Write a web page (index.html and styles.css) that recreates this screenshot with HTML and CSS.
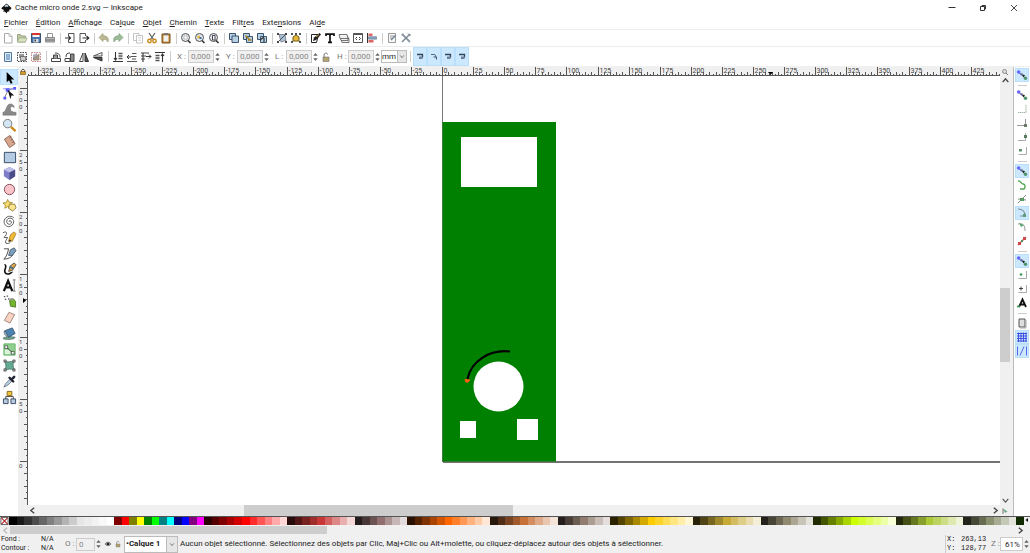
FILE: index.html
```html
<!DOCTYPE html>
<html lang="fr">
<head>
<meta charset="utf-8">
<title>Cache micro onde 2.svg — Inkscape</title>
<link rel="stylesheet" href="styles.css">
</head>
<body>
<svg class="sprite" aria-hidden="true">
  <symbol id="new" viewBox="0 0 12 12"><path d="M2.500 1.500h4.500l3 3v6.500h-7.500z" fill="#fff" stroke="#aaa"/><path d="M7 1.500v3h3" fill="none" stroke="#aaa" stroke-width=".7"/></symbol>
  <symbol id="open" viewBox="0 0 12 12"><path d="M1.500 10V2.500h3l1 1.500h4v6z" fill="#b9c8a0" stroke="#9aa58a"/><path d="M1.500 10l1.500-4h8l-1.500 4z" fill="#d8e4c0" stroke="#a3ad8e" stroke-width=".8"/></symbol>
  <symbol id="save" viewBox="0 0 12 12"><path d="M1.500 1.500h9v9h-9z" fill="#4a74ad" stroke="#3b5277"/><path d="M2.500 1h7v4h-7z" fill="#f4f4f4"/><path d="M2 1h8v2H2z" fill="#d9362b"/><path d="M3.500 7h5v3.500h-5z" fill="#ddd"/><path d="M4.500 7.500h1.500v2H4.500z" fill="#345"/></symbol>
  <symbol id="print" viewBox="0 0 12 12"><path d="M3.500 1.500h5v4h-5z" fill="#fff" stroke="#999"/><path d="M1.500 5.500h9v4.500h-9z" fill="#bbb" stroke="#888"/><path d="M2 8h8" stroke="#666"/></symbol>
  <symbol id="import" viewBox="0 0 12 12"><path d="M4.500 4V1.500h5.500v9H4.500V8" fill="#fff" stroke="#555"/><path d="M1 6h5M4.500 4l2 2-2 2" fill="none" stroke="#333" stroke-width="1.200"/></symbol>
  <symbol id="export" viewBox="0 0 12 12"><path d="M7.500 4V1.500H2v9h5.500V8" fill="#fff" stroke="#555"/><path d="M4.500 6h6M8.500 4l2.300 2-2.300 2" fill="none" stroke="#333" stroke-width="1.200"/></symbol>
  <symbol id="undo" viewBox="0 0 12 12"><path d="M1 5.500l4-4v2.300c4 0 6 1.700 5 6.200-1-2.300-2.500-2.800-5-2.700v2.200z" fill="#bdb993" stroke="#8f8b65" stroke-width=".6"/></symbol>
  <symbol id="redo" viewBox="0 0 12 12"><path d="M11 5.500l-4-4v2.300c-4 0-6 1.700-5 6.200 1-2.300 2.500-2.800 5-2.700v2.200z" fill="#9fbd9b" stroke="#6d9168" stroke-width=".6"/></symbol>
  <symbol id="copy" viewBox="0 0 12 12"><g fill="#fff" stroke="#b5b5b5" stroke-width=".8"><path d="M1.500 1.500h5.500v7H1.500z"/><path d="M4.500 3.500h6v7.500h-6z"/></g><path d="M6 5.500h3M6 7h3M6 8.500h3" stroke="#ccc" stroke-width=".6"/></symbol>
  <symbol id="cut" viewBox="0 0 12 12"><path d="M3 1l4.500 6.500M9 1L4.500 7.500" stroke="#666" stroke-width="1.300"/><circle cx="3.500" cy="9" r="1.700" fill="none" stroke="#c98716" stroke-width="1.400"/><circle cx="8.500" cy="9" r="1.700" fill="none" stroke="#c98716" stroke-width="1.400"/></symbol>
  <symbol id="paste" viewBox="0 0 12 12"><path d="M2 2h8v9H2z" fill="#c58a3a" stroke="#76501a"/><path d="M3.500 3.500h5v6h-5z" fill="#f1f1f1"/><path d="M4 1h4v2H4z" fill="#777"/></symbol>
  <symbol id="zoomsel" viewBox="0 0 12 12"><circle cx="5.500" cy="5.500" r="4" fill="#dfe6ec" stroke="#555"/><path d="M4 4h3v3H4z" fill="#fff" stroke="#aaa" stroke-width=".6"/><path d="M8 8.500l2.500 2.500" stroke="#333" stroke-width="1.600"/></symbol>
  <symbol id="zoomdraw" viewBox="0 0 12 12"><circle cx="5.500" cy="5.500" r="4" fill="#dfe6ec" stroke="#555"/><circle cx="4.700" cy="5" r="1.500" fill="#e8b93a"/><path d="M5.500 5h2v2h-2z" fill="#446faa"/><path d="M8 8.500l2.500 2.500" stroke="#333" stroke-width="1.600"/></symbol>
  <symbol id="zoompage" viewBox="0 0 12 12"><circle cx="5.500" cy="5.500" r="4" fill="#dfe6ec" stroke="#555"/><path d="M4.500 3.500h2.500V8H4.500z" fill="#fff" stroke="#445"/><path d="M8 8.500l2.500 2.500" stroke="#333" stroke-width="1.600"/></symbol>
  <symbol id="dup" viewBox="0 0 12 12"><g fill="#b9d0e2" stroke="#385470"><path d="M1.500 1.500h6v6h-6z"/><path d="M4 4h6.500v6.500H4z"/></g></symbol>
  <symbol id="clone" viewBox="0 0 12 12"><g fill="#b9d0e2" stroke="#385470"><path d="M1.500 1.500h6v6h-6z"/><path d="M4.500 4.500h6v6h-6z"/></g><path d="M3.500 3.500l4 4M6 8h3.500" stroke="#a78320" stroke-width="1.500"/></symbol>
  <symbol id="unlink" viewBox="0 0 12 12"><g fill="#b9d0e2" stroke="#385470"><path d="M1.500 1.500h6v6h-6z"/><path d="M4.500 4.500h6v6h-6z"/></g><path d="M4 8l4-3M8 6v4" stroke="#343434" stroke-width="1.200"/></symbol>
  <symbol id="group" viewBox="0 0 12 12"><path d="M3 2.500h6l1 6-5 1.500z" fill="#aac1d5" stroke="#667" stroke-width=".7"/><path d="M1 1h2v2H1zM9 1h2v2H9zM1 9h2v2H1zM9 9h2v2H9z" fill="#444"/><path d="M3 9l6-6" stroke="#456"/></symbol>
  <symbol id="ungroup" viewBox="0 0 12 12"><path d="M3 5l3-2 3 2v4H3z" fill="#e5b83c" stroke="#775b18"/><path d="M1 1h2v2H1zM9 1h2v2H9zM1 9h2v2H1zM9 9h2v2H9zM5 1h2v2H5z" fill="#555"/></symbol>
  <symbol id="fill" viewBox="0 0 12 12"><path d="M1.500 2.500h7l-2 8h-5z" fill="#fff" stroke="#222"/><path d="M3 9l1-3.500L9.500 1l1.500 1.500L6 8z" fill="#222"/><path d="M6 5l3-2.500" stroke="#d5a645"/></symbol>
  <symbol id="text" viewBox="0 0 12 12"><path d="M2 4V2.200h8V4M6 2v8.500M4 10.300h4" stroke="#111" stroke-width="1.700" fill="none"/></symbol>
  <symbol id="layers" viewBox="0 0 12 12"><g fill="#f2f2f2" stroke="#555" stroke-width=".8"><path d="M3 6.500h8v4H4z"/><path d="M2 4.500h8v4H3z"/><path d="M1 2.500h8l1 4H2z"/></g></symbol>
  <symbol id="xml" viewBox="0 0 12 12"><path d="M1.500 1.500h9v9h-9z" fill="#fff" stroke="#555"/><path d="M1.500 2.500h9" stroke="#555"/><path d="M5 5L3.500 6.500 5 8M7 5l1.500 1.500L7 8" fill="none" stroke="#444"/></symbol>
  <symbol id="align" viewBox="0 0 12 12"><path d="M1.500 1v10" stroke="#333"/><path d="M2.500 1.500h4v2.500h-4z" fill="#d66"/><path d="M2.500 4.700h8v2.500h-8z" fill="#85a5c3" stroke="#567" stroke-width=".5"/><path d="M2.500 8h5v2.500h-5z" fill="#d66"/></symbol>
  <symbol id="docprops" viewBox="0 0 12 12"><path d="M2.500 1.500h7v9h-7z" fill="#f6f6f6" stroke="#9a9a9a"/><path d="M4 4h4M4 6h2" stroke="#999"/><path d="M5 8l4.500-4.500" stroke="#6d8294" stroke-width="1.400"/></symbol>
  <symbol id="prefs" viewBox="0 0 12 12"><path d="M2 2l8 8" stroke="#8b98a5" stroke-width="1.800"/><path d="M10 2L2 10" stroke="#7b8893" stroke-width="1.400"/><path d="M8 1.500l1 2.500 2-1M1.500 3l2 .5L3 1.500" fill="none" stroke="#99a"/></symbol>
  <symbol id="selall" viewBox="0 0 12 12"><path d="M2.500 1.500h7v9h-7z" fill="#dcecff" stroke="#57779b"/><path d="M4 4h4M4 6h4M4 8h4" stroke="#4776ad"/></symbol>
  <symbol id="sellayer" viewBox="0 0 12 12"><path d="M1.500 1.500h9v9h-9z" fill="none" stroke="#444" stroke-dasharray="1.500 1"/><path d="M3 3h5v4H3z" fill="#999"/><path d="M4.500 5.500h5v4h-5z" fill="#ccc" stroke="#555" stroke-width=".7"/></symbol>
  <symbol id="desel" viewBox="0 0 12 12"><path d="M1.500 1.500h9v9h-9z" fill="none" stroke="#c88" stroke-dasharray="1.500 1"/><path d="M3 4l4-2v6l-4 2z" fill="#aab"/><path d="M3 8l6-5v6H4z" fill="#9a9a88" stroke="#a76" stroke-width=".7"/></symbol>
  <symbol id="rotl" viewBox="0 0 12 12"><path d="M1.500 7.500h9v3h-9z" fill="#fff" stroke="#444"/><path d="M3.500 7.500V4h4v3.500" fill="#999" stroke="#444"/><path d="M10 6.500c0-3.500-2-4.500-5-4.500" fill="none" stroke="#444"/></symbol>
  <symbol id="rotr" viewBox="0 0 12 12"><path d="M1 7.500h5v3H1z" fill="#fff" stroke="#444"/><path d="M6.500 3h3.500v7.500H6.500z" fill="#888" stroke="#444"/><path d="M2 6c0-3 1-4 4-4" fill="none" stroke="#444"/></symbol>
  <symbol id="fliph" viewBox="0 0 12 12"><path d="M5 2v8.500H1.500z" fill="#fff" stroke="#444"/><path d="M7 2v8.500h3.500z" fill="#555" stroke="#333"/></symbol>
  <symbol id="flipv" viewBox="0 0 12 12"><path d="M10 5V1.500L1.500 5z" fill="#fff" stroke="#555"/><path d="M10 6.500V10L1.500 6.500z" fill="#555" stroke="#333"/></symbol>
  <symbol id="bottom" viewBox="0 0 12 12"><path d="M1 10.500h10M3.500 1v8M2 7l1.500 2L5 7" stroke="#333" fill="none" stroke-width="1.100"/><path d="M6.500 2.500h4M6.500 5h4M6.500 7.500h4" stroke="#555" stroke-width="1.400"/></symbol>
  <symbol id="lower" viewBox="0 0 12 12"><path d="M1 6h4M3 4L1 6l2 2" stroke="#333" fill="none"/><path d="M6 2.500h4.500M5 5.500h5.500M1 10.500h10M6 8h4" stroke="#555" stroke-width="1.200"/></symbol>
  <symbol id="raise" viewBox="0 0 12 12"><path d="M1 2h8M1 5h5M1 8h4M3 2v9" stroke="#444" stroke-width="1.200"/><path d="M6 5.500h5M9 3.500l2 2-2 2" stroke="#333" fill="none"/></symbol>
  <symbol id="top" viewBox="0 0 12 12"><path d="M1 1.500h10M8.500 11V3M7 5l1.500-2L10 5" stroke="#333" fill="none" stroke-width="1.100"/><path d="M1.500 4.500h4M1.500 7h4M1.500 9.500h4" stroke="#555" stroke-width="1.400"/></symbol>
  <symbol id="lock" viewBox="0 0 12 12"><path d="M4 6V4c0-2.500 3.500-2.500 3.500-.5" fill="none" stroke="#777"/><path d="M3 6h6v4.500H3z" fill="#b3a36c" stroke="#777" stroke-width=".6"/></symbol>
  <symbol id="affect" viewBox="0 0 12 12"><path d="M3 3.500h5.500v3" stroke="#345" fill="none" stroke-width="1.300"/><path d="M5 5.500h3.500v2.500H5z" fill="#6c7f93"/></symbol>
  <symbol id="affect2" viewBox="0 0 12 12"><path d="M3 3.500h3c1.500 0 2 1 2 3" stroke="#567" fill="none"/><path d="M5.500 6h3v2.500" fill="none" stroke="#456"/></symbol>

  <symbol id="arrow" viewBox="0 0 16 16"><path d="M5 2l8 8H9.500l1.800 3.800-2 .9-1.800-3.900L5 13z" fill="#000"/></symbol>
  <symbol id="node" viewBox="0 0 16 16"><path d="M3 13C4 7 8 3 14 2.500" fill="none" stroke="#777"/><path d="M1.500 11.500h3v3h-3zM12 1h3v3h-3zM4 2h4v4H4z" fill="#5a5aff"/><path d="M1 3h12" stroke="#88f"/><path d="M6 4l7 6H10l-1 4z" fill="#111"/></symbol>
  <symbol id="tweak" viewBox="0 0 16 16"><path d="M1 14v-3c4 0 3-9 8-9 3 0 4 2 4 4-2-2-4-1-4 1 0 3 2 4 6 4v3z" fill="#888" stroke="#777" stroke-width=".6"/></symbol>
  <symbol id="zoom" viewBox="0 0 16 16"><circle cx="6" cy="6" r="4.500" fill="#d4e6f5" stroke="#777"/><path d="M9.500 9.500l5 4.500" stroke="#c98a1b" stroke-width="2.500"/></symbol>
  <symbol id="measure" viewBox="0 0 16 16"><path d="M2.500 5.500l6-4 5.500 9-6 4z" fill="#d8a58e" stroke="#775043" stroke-width=".8"/><path d="M8 4l2-1M9.500 6.500l2-1M11 9l2-1" stroke="#754"/></symbol>
  <symbol id="rect" viewBox="0 0 16 16"><path d="M2.500 2.500h12v11h-12z" fill="#b4cce3" stroke="#33475e"/></symbol>
  <symbol id="box" viewBox="0 0 16 16"><path d="M8 1l6 3v7l-6 4-6-4V4z" fill="#7d7dc8"/><path d="M8 1l6 3-6 3-6-3z" fill="#bfc0ea"/><path d="M8 7v8l6-4V4z" fill="#494a88"/></symbol>
  <symbol id="circle" viewBox="0 0 16 16"><circle cx="8" cy="8" r="5.500" fill="#fbc3ca" stroke="#7b4b55"/></symbol>
  <symbol id="star" viewBox="0 0 16 16"><path d="M6 1.500l1.500 3 3.500.3-2.500 2.200.8 3.500L6 9.200 3 11l.6-3.500L1 5.300 4.500 5z" fill="#f8de70" stroke="#9a7b19" stroke-width=".8"/><path d="M8 6.500h5.500l1.500 4-3.500 3.500-4.500-3z" fill="#fae58e" stroke="#7b6622" stroke-width=".8"/></symbol>
  <symbol id="spiral" viewBox="0 0 16 16"><path d="M8 8.500c-1-1 .5-2 1.500-1 1.500 1.500 0 3.500-1.700 3.500C5 11 4.500 8 5.500 6c2-3 7-1.500 7 2 0 3-2.500 5.500-5.500 5.500C3 13 1.500 9.500 2.500 6.500 4 2.500 9 1 12.500 4" fill="none" stroke="#555"/></symbol>
  <symbol id="pencil" viewBox="0 0 16 16"><path d="M1 3c5-3 5 2 1 5h4c-1 2-3 4-2 6 2 1 4 0 5-1" fill="none" stroke="#555"/><path d="M7 12l2-7 4-3 2 2-4 8z" fill="#efba35" stroke="#8c661a" stroke-width=".7"/><path d="M7 13l1-3 2 1z" fill="#222"/></symbol>
  <symbol id="pen" viewBox="0 0 16 16"><path d="M2 3h5c-1 5-2 8-5 11 5 0 8-2 10-5" fill="none" stroke="#444"/><path d="M7 10l2-6 4-2 2 3-4 5z" fill="#7ba0bf" stroke="#345" stroke-width=".8"/></symbol>
  <symbol id="calli" viewBox="0 0 16 16"><path d="M2 2c4 0 3 4 2 6-1 4 2 5 5 3l3-1c-2 4-10 6-10-1 1-3 2-5 0-7z" fill="#111"/><path d="M7 10l2-6 4-3 2 2-4 6z" fill="#dca446" stroke="#333" stroke-width=".8"/><path d="M8 5l4 2" stroke="#456c96" stroke-width="2"/></symbol>
  <symbol id="txt" viewBox="0 0 16 16"><path d="M2 14L6.500 3l4.500 11M3.500 10h6" fill="none" stroke="#111" stroke-width="2.400"/><path d="M13 2v12M11.500 2h3M11.500 14h3" stroke="#777"/></symbol>
  <symbol id="spray" viewBox="0 0 16 16"><path d="M2 2h1.500v1.500H2zM5 1.500h1.500V3H5zM3 5h1.500v1.500H3zM6.500 4.500H8V6H6.500z" fill="#555"/><path d="M8 7l4-2 2.500 3v6L9 13z" fill="#73b52e" stroke="#436a1d" stroke-width=".8"/><path d="M8 5l3-1 1 2-3 1z" fill="#999"/></symbol>
  <symbol id="eraser" viewBox="0 0 16 16"><path d="M7.500 2.500l6 2.500-5 9-6-3z" fill="#f8d3c4" stroke="#8d6f63" stroke-width=".8"/></symbol>
  <symbol id="bucket" viewBox="0 0 16 16"><path d="M1 13c2-2 11-2 13-1 0 3-13 3-13 1z" fill="#6eaa87" stroke="#456" stroke-width=".6"/><path d="M3 5l8-3 3 6-7 4z" fill="#4b84b2" stroke="#2c465d" stroke-width=".8"/><path d="M3 5l4 7c-3-1-6-4-4-7z" fill="#a7c6dd" stroke="#456" stroke-width=".8"/></symbol>
  <symbol id="gradient" viewBox="0 0 16 16"><path d="M2 2h12v12H2z" fill="#8fd08f" stroke="#6ab56a"/><path d="M3 8h6v5H3z" fill="#d9f2d9"/><path d="M5 6l6 5" stroke="#333"/><path d="M3 4h3v3H3zM10 10h3v3h-3z" fill="#fff" stroke="#333" stroke-width=".7"/></symbol>
  <symbol id="mesh" viewBox="0 0 16 16"><path d="M3 3c4 2 6 1 10 0-2 4-1 6 0 10-4-2-6-1-10 0 2-4 1-6 0-10z" fill="#65ab91" stroke="#35685a" stroke-width=".8"/><path d="M2 2h2.500v2.500H2zM11.500 2H14v2.500h-2.500zM2 11.500h2.500V14H2zM11.500 11.500H14V14h-2.500z" fill="#999" stroke="#444" stroke-width=".6"/></symbol>
  <symbol id="dropper" viewBox="0 0 16 16"><path d="M2 14l2-4 5-5 2 2-5 5z" fill="#b9cfdf" stroke="#567" stroke-width=".8"/><path d="M8 4l4 4M10 6l3-3" stroke="#223" stroke-width="2.600" stroke-linecap="round"/></symbol>
  <symbol id="connector" viewBox="0 0 16 16"><path d="M4 11V7h8v4M8 7V5" fill="none" stroke="#444"/><path d="M5.500 1.500h5v4.500h-5z" fill="#f0c53a" stroke="#86691d"/><path d="M1.500 9.500h5v5h-5zM9.500 9.500h5v5h-5z" fill="#b8cbe0" stroke="#344a63"/></symbol>

  <symbol id="snap" viewBox="0 0 12 12"><path d="M2 3l7.500 6" stroke="#666"/><circle cx="2.700" cy="3" r="1.800" fill="#66f"/><path d="M4.500 4.200h2v2h-2z" fill="#66a"/><path d="M6 5.500l3 .5-1.500 2.500z" fill="#222"/><circle cx="9.500" cy="9.200" r="1.700" fill="#4a9468"/></symbol>
  <symbol id="s1" viewBox="0 0 12 12"><path d="M2 9.500h8V2" fill="none" stroke="#a5b8a5" stroke-dasharray="1.500 .5"/></symbol>
  <symbol id="s2" viewBox="0 0 12 12"><path d="M1 8.500h8.500V2" fill="none" stroke="#999"/><path d="M8 7h3v3H8z" fill="#677b6b"/></symbol>
  <symbol id="s3" viewBox="0 0 12 12"><path d="M2 9.500h7.500V2" fill="none" stroke="#aaa"/><path d="M8 4h3v3H8z" fill="#567b5e"/></symbol>
  <symbol id="s4" viewBox="0 0 12 12"><path d="M2.500 9.500h8V2" fill="none" stroke="#aaa"/><path d="M3 4h3v2.500H3z" fill="#5f9470"/></symbol>
  <symbol id="s5" viewBox="0 0 12 12"><path d="M2 2c3-.5 3 3 5 3s3 3 1 5H4" fill="none" stroke="#55a855" stroke-width="1.400"/></symbol>
  <symbol id="s6" viewBox="0 0 12 12"><path d="M2 10l8-8M2 6l8 1" stroke="#8a8a8a"/><path d="M4 5h4v3H4z" fill="#579b5e"/></symbol>
  <symbol id="s7" viewBox="0 0 12 12"><path d="M2 2c5 0 7 2 7 7H4" fill="none" stroke="#7f9099" stroke-width="1.200"/><path d="M7 7h3v3H7z" fill="#599c77"/></symbol>
  <symbol id="s8" viewBox="0 0 12 12"><path d="M2 3c5-1 7 1 7 7" fill="none" stroke="#999"/><path d="M3 2l5 2-3 2z" fill="#57a672"/></symbol>
  <symbol id="s9" viewBox="0 0 12 12"><path d="M2 10l8-8" stroke="#a66" stroke-width="1.500"/><path d="M2 7h3v3H2zM7 2h3v3H7z" fill="#cf4747"/><path d="M5 5h2v2H5z" fill="#5a8f5a"/></symbol>
  <symbol id="s10" viewBox="0 0 12 12"><path d="M2.500 9.500h8V2" fill="none" stroke="#aaa"/><circle cx="5" cy="5.500" r="1.300" fill="#3a9a55"/></symbol>
  <symbol id="s11" viewBox="0 0 12 12"><path d="M2.500 9.500h8V2" fill="none" stroke="#aaa"/><path d="M5 3.500v4M3 5.500h4" stroke="#444"/></symbol>
  <symbol id="s12" viewBox="0 0 12 12"><path d="M3 10l3.500-7.500L10 10M4 7.500h5" fill="none" stroke="#111" stroke-width="1.800"/><path d="M1 9.500h3" stroke="#3a9a55" stroke-width="1.600"/></symbol>
  <symbol id="s13" viewBox="0 0 12 12"><path d="M3 2h6v8H3z" fill="#ddd" stroke="#555"/><path d="M10 3v8H4" fill="none" stroke="#aaa"/></symbol>
  <symbol id="s14" viewBox="0 0 12 12"><path d="M1 2.500h10M1 5h10M1 7.500h10M1 10h10M2.500 1.500v9.500M5 1.500v9.500M7.500 1.500v9.500M10 1.500v9.500" fill="none" stroke="#3f4fe0"/></symbol>
  <symbol id="s15" viewBox="0 0 12 12"><path d="M1.500 1.500v9M10.500 1.500v9M4 10.500l4-9" fill="none" stroke="#5566ee"/></symbol>
  <symbol id="spin" viewBox="0 0 8 12"><path d="M4 1.500L6.500 4.500h-5zM4 10.500L1.500 7.500h5z" fill="#666"/></symbol>
  <symbol id="down" viewBox="0 0 8 8"><path d="M1.500 2.500L4 5.500l2.500-3" fill="none" stroke="#555"/></symbol>
  <symbol id="up" viewBox="0 0 8 8"><path d="M1.500 5.500L4 2.500l2.500 3" fill="none" stroke="#444" stroke-width="1.200"/></symbol>
  <symbol id="left" viewBox="0 0 8 8"><path d="M5.500 1.500L2.500 4l3 2.500" fill="none" stroke="currentColor" stroke-width="1.200"/></symbol>
  <symbol id="right" viewBox="0 0 8 8"><path d="M2.500 1.500L5.500 4l-3 2.500" fill="none" stroke="currentColor" stroke-width="1.200"/></symbol>
</svg>

<div class="app">
  <header class="titlebar">
    <svg class="logo" viewBox="0 0 12 12"><path d="M6 .5l5.500 5-1 1.500-2 .5 1 1.500-2.500.500L6 11.500l-1.500-2L2 9l1.500-1.500L.8 6.500.5 5.500z" fill="#111"/><path d="M6 1.300l2.300 2.200-1.300.8L6 3.700l-1 .8-1.300-1z" fill="#c9d4e0"/></svg>
    <h1 class="title">Cache micro onde 2.svg — Inkscape</h1>
    <div class="wincontrols">
      <button aria-label="Réduire"><svg viewBox="0 0 8 8"><path d="M.5 3.500h7" stroke="#333"/></svg></button>
      <button aria-label="Restaurer"><svg viewBox="0 0 8 8"><path d="M1.500 2.500h4v4h-4zM3 2V1.500h3.500V5H6" fill="none" stroke="#333"/></svg></button>
      <button aria-label="Fermer"><svg viewBox="0 0 8 8"><path d="M1 1l6 6M7 1L1 7" stroke="#333" stroke-width=".9"/></svg></button>
    </div>
  </header>
  <nav class="menubar">
    <button><u>F</u>ichier</button><button><u>É</u>dition</button><button><u>A</u>ffichage</button><button>Ca<u>l</u>que</button><button><u>O</u>bjet</button><button><u>C</u>hemin</button><button><u>T</u>exte</button><button>Filt<u>r</u>es</button><button>Exte<u>n</u>sions</button><button>Ai<u>d</u>e</button>
  </nav>
  <div class="toolbar commands">
    <button aria-label="Nouveau"><svg><use href="#new"/></svg></button><button aria-label="Ouvrir"><svg><use href="#open"/></svg></button><button aria-label="Enregistrer"><svg><use href="#save"/></svg></button><button aria-label="Imprimer"><svg><use href="#print"/></svg></button><i class="sep"></i>
    <button aria-label="Importer"><svg><use href="#import"/></svg></button><button aria-label="Exporter"><svg><use href="#export"/></svg></button><i class="sep"></i>
    <button aria-label="Annuler"><svg><use href="#undo"/></svg></button><button aria-label="Rétablir"><svg><use href="#redo"/></svg></button><i class="sep"></i>
    <button aria-label="Copier"><svg><use href="#copy"/></svg></button><button aria-label="Couper"><svg><use href="#cut"/></svg></button><button aria-label="Coller"><svg><use href="#paste"/></svg></button><i class="sep"></i>
    <button aria-label="Zoom sélection"><svg><use href="#zoomsel"/></svg></button><button aria-label="Zoom dessin"><svg><use href="#zoomdraw"/></svg></button><button aria-label="Zoom page"><svg><use href="#zoompage"/></svg></button><i class="sep"></i>
    <button aria-label="Dupliquer"><svg><use href="#dup"/></svg></button><button aria-label="Cloner"><svg><use href="#clone"/></svg></button><button aria-label="Délier le clone"><svg><use href="#unlink"/></svg></button><i class="sep"></i>
    <button aria-label="Grouper"><svg><use href="#group"/></svg></button><button aria-label="Dégrouper"><svg><use href="#ungroup"/></svg></button><i class="sep"></i>
    <button aria-label="Fond et contour"><svg><use href="#fill"/></svg></button><button aria-label="Texte et police"><svg><use href="#text"/></svg></button><button aria-label="Calques"><svg><use href="#layers"/></svg></button><button aria-label="Éditeur XML"><svg><use href="#xml"/></svg></button><button aria-label="Aligner et distribuer"><svg><use href="#align"/></svg></button><i class="sep"></i>
    <button aria-label="Propriétés du document"><svg><use href="#docprops"/></svg></button><button aria-label="Préférences"><svg><use href="#prefs"/></svg></button>
  </div>
  <div class="toolbar controls">
    <button aria-label="Tout sélectionner"><svg><use href="#selall"/></svg></button><button aria-label="Tout sélectionner dans les calques"><svg><use href="#sellayer"/></svg></button><button aria-label="Désélectionner"><svg><use href="#desel"/></svg></button><i class="sep"></i>
    <button aria-label="Rotation à gauche"><svg><use href="#rotl"/></svg></button><button aria-label="Rotation à droite"><svg><use href="#rotr"/></svg></button><button aria-label="Miroir horizontal"><svg><use href="#fliph"/></svg></button><button aria-label="Miroir vertical"><svg><use href="#flipv"/></svg></button><i class="sep"></i>
    <button aria-label="Arrière-plan"><svg><use href="#bottom"/></svg></button><button aria-label="Descendre"><svg><use href="#lower"/></svg></button><button aria-label="Monter"><svg><use href="#raise"/></svg></button><button aria-label="Premier plan"><svg><use href="#top"/></svg></button><i class="sep"></i>
    <label class="field"><span class="name">X :</span><span class="spinbox"><input value="0,000" disabled><svg><use href="#spin"/></svg></span></label>
    <label class="field"><span class="name">Y :</span><span class="spinbox"><input value="0,000" disabled><svg><use href="#spin"/></svg></span></label>
    <label class="field"><span class="name">L :</span><span class="spinbox"><input value="0,000" disabled><svg><use href="#spin"/></svg></span></label>
    <button class="ratio" aria-label="Verrouiller les proportions"><svg><use href="#lock"/></svg></button>
    <label class="field"><span class="name">H :</span><span class="spinbox"><input value="0,000" disabled><svg><use href="#spin"/></svg></span></label>
    <span class="combo unit"><select aria-label="Unité"><option>mm</option></select><svg><use href="#down"/></svg></span><i class="sep"></i>
    <button class="on" aria-label="Contours"><svg><use href="#affect"/></svg></button><button class="on" aria-label="Coins"><svg><use href="#affect2"/></svg></button><button class="on" aria-label="Dégradés"><svg><use href="#affect"/></svg></button><button class="on" aria-label="Motifs"><svg><use href="#affect"/></svg></button>
  </div>

  <main class="workspace">
    <div class="toolbox">
      <button class="on" aria-label="Sélecteur"><svg><use href="#arrow"/></svg></button><button aria-label="Nœuds"><svg><use href="#node"/></svg></button><button aria-label="Ajuster"><svg><use href="#tweak"/></svg></button><button aria-label="Zoom"><svg><use href="#zoom"/></svg></button><button aria-label="Mesure"><svg><use href="#measure"/></svg></button><button aria-label="Rectangle"><svg><use href="#rect"/></svg></button><button aria-label="Boîte 3D"><svg><use href="#box"/></svg></button><button aria-label="Ellipse"><svg><use href="#circle"/></svg></button><button aria-label="Étoile"><svg><use href="#star"/></svg></button><button aria-label="Spirale"><svg><use href="#spiral"/></svg></button><button aria-label="Crayon"><svg><use href="#pencil"/></svg></button><button aria-label="Stylo"><svg><use href="#pen"/></svg></button><button aria-label="Calligraphie"><svg><use href="#calli"/></svg></button><button aria-label="Texte"><svg><use href="#txt"/></svg></button><button aria-label="Aérographe"><svg><use href="#spray"/></svg></button><button aria-label="Gomme"><svg><use href="#eraser"/></svg></button><button aria-label="Remplissage"><svg><use href="#bucket"/></svg></button><button aria-label="Dégradé"><svg><use href="#gradient"/></svg></button><button aria-label="Filet"><svg><use href="#mesh"/></svg></button><button aria-label="Pipette"><svg><use href="#dropper"/></svg></button><button aria-label="Connecteur"><svg><use href="#connector"/></svg></button>
    </div>
    <div class="desk">
      <div class="corner"><svg viewBox="0 0 8 8"><path d="M2.500 4V2.500c0-1.500 3-1.500 3 0V4" fill="none" stroke="#555"/><path d="M1.500 3.500h5v3h-5z" fill="#d49a22" stroke="#70501a" stroke-width=".6"/></svg></div>
      <svg class="hruler" id="hruler"></svg>
      <div class="corner"><svg viewBox="0 0 8 8"><circle cx="3.500" cy="3.500" r="2" fill="#ddd" stroke="#777" stroke-width=".8"/><path d="M5 5l2 2" stroke="#777"/></svg></div>
      <svg class="vruler" id="vruler"></svg>
      <svg class="canvas">
        <path d="M414.500 0v386" stroke="#777"/>
        <path d="M415 386h2000" stroke="#444" stroke-width="1.500"/>
        <path d="M414.500 46h113.500v339.500h-113.500z" fill="#008000"/>
        <path d="M433 61h76v50h-76zM432 345h16v17h-16zM489 343h21v21h-21z" fill="#fff"/>
        <circle cx="470.500" cy="310.500" r="25" fill="#fff"/>
        <path d="M482 275.500C462 273 443 285 439.500 303" fill="none" stroke="#000" stroke-width="2.200"/>
        <path d="M437 303.500l5 .5-2.500 2.500-2-1z" fill="#ff5a10" stroke="#ff5a10"/>
      </svg>
      <div class="vscroll"><svg><use href="#up"/></svg><div class="vtrack"><span class="vthumb"></span></div><svg><use href="#down"/></svg></div>
      <div class="corner"></div>
      <div class="hscroll"><svg><use href="#left"/></svg><div class="htrack"><span class="hthumb"></span></div><svg><use href="#right"/></svg></div>
      <div class="corner"><svg viewBox="0 0 8 8"><path d="M2 1.500l4.500 3L4 6z" fill="#6a8"/><path d="M2 1.500V7" stroke="#777"/></svg></div>
    </div>
    <div class="snapbar">
      <button class="on" aria-label="Magnétisme"><svg><use href="#snap"/></svg></button><i class="hsep"></i>
      <button aria-label="Boîtes englobantes"><svg><use href="#snap"/></svg></button><button aria-label="Bords"><svg><use href="#s1"/></svg></button><button aria-label="Coins de boîte"><svg><use href="#s2"/></svg></button><button aria-label="Milieux de bord"><svg><use href="#s3"/></svg></button><button aria-label="Centres de boîte"><svg><use href="#s4"/></svg></button><i class="hsep"></i>
      <button class="on" aria-label="Nœuds et chemins"><svg><use href="#snap"/></svg></button><button aria-label="Chemins"><svg><use href="#s5"/></svg></button><button aria-label="Intersections"><svg><use href="#s6"/></svg></button><button class="on" aria-label="Points de rebroussement"><svg><use href="#s7"/></svg></button><button aria-label="Nœuds doux"><svg><use href="#s8"/></svg></button><button aria-label="Milieux de segment"><svg><use href="#s9"/></svg></button><i class="hsep"></i>
      <button class="on" aria-label="Autres points"><svg><use href="#snap"/></svg></button><button aria-label="Centres d'objet"><svg><use href="#s10"/></svg></button><button aria-label="Centres de rotation"><svg><use href="#s11"/></svg></button><button aria-label="Lignes de base"><svg><use href="#s12"/></svg></button><i class="hsep"></i>
      <button aria-label="Bordure de page"><svg><use href="#s13"/></svg></button><button class="on" aria-label="Grilles"><svg><use href="#s14"/></svg></button><button class="on" aria-label="Guides"><svg><use href="#s15"/></svg></button>
    </div>
  </main>

  <div class="palette">
    <button class="none" aria-label="Aucun"><svg viewBox="0 0 9 9"><path d="M.5.5h8v8h-8z" fill="#fff" stroke="#555"/><path d="M1 1l7 7M8 1L1 8" stroke="#a22" stroke-width="1.200"/></svg></button>
    <div class="swatches" id="swatches"></div>
    <button class="palmenu" aria-label="Menu de la palette"><svg viewBox="0 0 6 8"><path d="M4 1v4L1.500 3z" fill="#111"/></svg></button>
  </div>
  <div class="palscroll"><svg class="dim"><use href="#left"/></svg><div class="htrack"><span class="palthumb"></span></div><svg><use href="#right"/></svg></div>

  <footer class="status">
    <dl class="style"><dt>Fond :</dt><dd>N/A</dd><dt>Contour :</dt><dd>N/A</dd></dl>
    <label class="field opacity"><span class="name">O :</span><span class="spinbox"><input value="0" disabled><svg><use href="#spin"/></svg></span></label>
    <div class="layerbox">
      <button aria-label="Visibilité du calque"><svg viewBox="0 0 12 12"><path d="M1.500 6c2-3.500 7-3.500 9 0-2 3-7 3-9 0z" fill="#aaa" stroke="#555"/><circle cx="6" cy="6" r="1.800" fill="#222"/></svg></button>
      <button aria-label="Verrou du calque"><svg><use href="#lock"/></svg></button>
      <span class="combo layer"><select aria-label="Calque"><option>•Calque 1</option></select><svg><use href="#down"/></svg></span>
    </div>
    <p class="message">Aucun objet sélectionné. Sélectionnez des objets par Clic, Maj+Clic ou Alt+molette, ou cliquez-déplacez autour des objets à sélectionner.</p>
    <dl class="coords"><dt>X:</dt><dd>263,13</dd><dt>Y:</dt><dd>128,77</dd></dl>
    <label class="field zoomfield"><span class="name">Z :</span><span class="spinbox"><input value="61%"><svg><use href="#spin"/></svg></span></label>
  </footer>
</div>
<script src="app.js"></script>
</body>
</html>
```
FILE: styles.css
```css
* { box-sizing: border-box; }
body {
  margin: 0;
  font: 8px/12px Roboto, "Noto Sans", sans-serif;
  color: #222;
  background: #fff;
}
button, input, select { font: inherit; color: inherit; margin: 0; padding: 0; border: 0; background: none; }
svg { display: block; flex: none; }
.sprite { position: absolute; width: 0; height: 0; }
.app { display: flex; flex-direction: column; height: 100vh; overflow: hidden; }

.titlebar { display: flex; align-items: center; height: 16px; flex: none; padding: 0 8px 0 1px; gap: 3px; }
.logo { width: 11px; height: 11px; }
.title { margin: 0; font-size: 8px; font-weight: 400; flex: 1; }
.wincontrols { display: flex; gap: 14px; }
.wincontrols button { width: 17px; display: flex; justify-content: center; }
.wincontrols svg { width: 8px; height: 8px; }

.menubar { display: flex; align-items: center; gap: 8px; height: 13px; flex: none; padding-left: 4px; }
.menubar button { line-height: 12px; white-space: nowrap; }
.menubar u { text-underline-offset: 1px; text-decoration-thickness: 1px; }

.toolbar { display: flex; align-items: center; flex: none; padding-left: 1px; border-top: 1px solid #ececec; }
.toolbar > button { width: 14px; height: 100%; display: flex; align-items: center; justify-content: center; flex: none; }
.toolbar > button svg { width: 12px; height: 12px; }
.commands { height: 17px; }
.controls { height: 21px; border-bottom: 1px solid #f0f0f0; }
.sep { width: 6px; height: 11px; flex: none; background: linear-gradient(#ccc, #ccc) center / 1px 100% no-repeat; }
.on { background: #cce8ff; box-shadow: inset 0 0 0 1px #b9dffb; }

.field { display: flex; align-items: center; color: #777; white-space: nowrap; }
.name { width: 11px; }
.controls .field { margin-left: 5px; }
.controls .field:first-of-type { margin-left: 4px; }
.ratio + .field { margin-left: 4px; }
.spinbox { display: flex; align-items: center; }
.spinbox input { width: 26px; height: 13px; padding-left: 2px; border: 1px solid #ccc; background: #f0f0f0; color: #888; }
.spinbox svg { width: 7px; height: 12px; }
.combo { display: flex; align-items: center; position: relative; }
.combo select { appearance: none; width: 100%; height: 100%; border: 1px solid #bbb; border-radius: 0; background: #fff; color: #222; }
.combo svg { position: absolute; right: 0; top: 0; width: 10px; height: 100%; padding: 0 1px; background: #e6e6e6; border: 1px solid #bbb; pointer-events: none; }
.unit { width: 26px; height: 13px; }

.workspace { display: flex; flex: 1; min-height: 0; }
.toolbox { width: 18px; flex: none; padding-top: 2px; display: flex; flex-direction: column; }
.toolbox button { height: 16px; flex: none; display: flex; align-items: center; justify-content: center; }
.toolbox svg { width: 15px; height: 15px; }
.desk { flex: 1; min-width: 0; display: grid; grid-template: 9px 1fr 11px / 10px 1fr 10px; background: #f0f0f0; }
.corner { display: flex; align-items: center; justify-content: center; }
.corner svg { width: 8px; height: 8px; }
.hruler, .vruler, .canvas { width: 100%; height: 100%; min-width: 0; min-height: 0; overflow: hidden; }
.hruler { border-bottom: 1px solid #555; }
.vruler { border-right: 1px solid #555; }
.hruler text { font: 7px Roboto, sans-serif; fill: #444; }
.vruler text { font: 6px Roboto, sans-serif; fill: #444; }
.canvas { background: #fff; }
.vscroll { display: flex; flex-direction: column; align-items: center; }
.vscroll svg, .hscroll svg, .palscroll svg { width: 9px; height: 9px; color: #444; }
.vtrack { flex: 1; width: 100%; display: flex; flex-direction: column; }
.vthumb { margin-top: 203px; height: 18%; background: #cdcdcd; }
.hscroll { display: flex; align-items: center; }
.htrack { flex: 1; height: 100%; display: flex; }
.hthumb { margin-left: 21.7%; width: 28.2%; background: #cdcdcd; }
.snapbar { width: 20px; flex: none; padding: 1px 1px 0 5px; display: flex; flex-direction: column; background: linear-gradient(90deg, #f0f0f0 3px, #bbb 3px, #bbb 4px, #fff 4px); }
.snapbar button { height: 14px; flex: none; display: flex; align-items: center; justify-content: center; }
.snapbar svg { width: 12px; height: 12px; }
.hsep { height: 6px; flex: none; background: linear-gradient(#ccc, #ccc) center / 9px 1px no-repeat; }

.palette { display: flex; height: 9px; flex: none; border-top: 1px solid #555; background: #f0f0f0; }
.none { width: 9px; }
.none svg { width: 9px; height: 8px; }
.swatches { flex: 1; display: flex; }
.swatches button { flex: 1; min-width: 0; }
.palmenu { width: 6px; }
.palmenu svg { width: 6px; height: 8px; }
.palscroll { display: flex; align-items: center; height: 10px; flex: none; padding: 1px 5px 1px 1px; background: #f0f0f0; }
.palscroll .dim { color: #bbb; }
.palthumb { width: 31.5%; background: #cdcdcd; }

.status { display: flex; align-items: center; height: 18px; flex: none; background: #f0f0f0; white-space: nowrap; }
.style { display: grid; grid-template-columns: 40px 24px; line-height: 9px; margin: 0; padding-left: 1px; font-size: 7px; }
dd { margin: 0; }
.opacity .spinbox input { width: 19px; }
.layerbox { display: flex; align-items: center; height: 100%; margin-left: 1px; }
.layerbox > button { width: 10px; display: flex; justify-content: center; }
.layerbox > button svg { width: 8px; height: 8px; }
.layer { width: 54px; height: 17px; margin-left: 1px; font-weight: 700; }
.layer select { padding-left: 1px; }
.layer svg { width: 12px; padding: 0 2px; }
.message { flex: 1; margin: 0 0 0 2px; }
.coords { display: grid; grid-template-columns: 14px 30px; line-height: 9px; margin: 0; padding-left: 1px; border-left: 1px solid #ccc; font-family: "Liberation Mono", monospace; font-size: 7px; }
.zoomfield .name { width: 9px; }
.zoomfield .spinbox input { width: 23px; height: 14px; padding-left: 4px; background: #fff; color: #222; }
```
FILE: app.js
```js
const NS = "http://www.w3.org/2000/svg";
const UNIT = 1.244;

function add(parent, tag, attrs, text) {
  const el = document.createElementNS(NS, tag);
  for (const key in attrs) el.setAttribute(key, attrs[key]);
  if (text !== undefined) el.textContent = text;
  parent.appendChild(el);
}

function horizontalRuler(svg, origin) {
  const width = svg.getBoundingClientRect().width;
  let ticks = "";
  for (let i = -133; ; i++) {
    const x = Math.round(origin + i * 2.5 * UNIT) + 0.5;
    if (x > width) break;
    if (x < 0) continue;
    const major = i % 10 === 0;
    ticks += `M${x} 9v${major ? -9 : i % 2 ? -2 : -4}`;
    if (major && x + 15 < width) add(svg, "text", { x: x + 1, y: 6 }, i * 2.5);
  }
  add(svg, "path", { d: ticks, stroke: "#555", fill: "none" });
  add(svg, "path", { d: "M740 5h5l-2.500 3z", fill: "#000" });
}

function verticalRuler(svg, origin) {
  const height = svg.getBoundingClientRect().height;
  let ticks = "";
  for (let i = 61; ; i--) {
    const y = Math.round(origin - i * 5 * UNIT) + 0.5;
    if (y > height) break;
    if (y < 0) continue;
    const major = i % 10 === 0;
    ticks += `M10 ${y}h${major ? -8 : i % 2 ? -2 : -4}`;
    if (major) String(i * 5).split("").forEach((digit, n) =>
      add(svg, "text", { x: 1, y: y + 6 + n * 7 }, digit));
  }
  add(svg, "path", { d: ticks, stroke: "#555", fill: "none" });
  add(svg, "path", { d: "M5 222v5l3-2.500z", fill: "#000" });
}

horizontalRuler(document.getElementById("hruler"), 414);
verticalRuler(document.getElementById("vruler"), 385);

const colours = `
000000 1a1a1a 333333 4d4d4d 666666 808080 999999 b3b3b3 cccccc e6e6e6 ececec f2f2f2 f9f9f9 ffffff
800000 ff0000 808000 ffff00 008000 00ff00 008080 00ffff 000080 0000ff 800080 ff00ff
2b0000 550000 800000 aa0000 d40000 ff0000 ff2a2a ff5555 ff8080 ffaaaa ffd5d5
280b0b 501616 782121 a02c2c c83737 d35f5f de8787 e9afaf f4d7d7
241c1c 483737 6c5353 916f6f ac9393 c8b7b7 e3dbdb
2b1100 552200 803300 aa4400 d45500 ff6600 ff7f2a ff9955 ffb380 ffccaa ffe6d5
28170b 502d16 784421 a05a2c c87137 d38d5f deaa87 e9c6af f4e3d7
241f1c 483e37 6c5d53 917c6f ac9d93 c8beb7 e3dedb
2b2200 554400 806600 aa8800 d4aa00 ffcc00 ffd42a ffdd55 ffe680 ffeeaa fff6d5
28220b 504416 786721 a0892c c8ab37 d3bc5f decd87 e9ddaf f4eed7
24221c 484537 6c6753 918a6f aca793 c8c4b7 e3e2db
222b00 445500 668000 88aa00 aad400 ccff00 d4ff2a ddff55 e5ff80 eeffaa f6ffd5
22280b 445016 677821 89a02c abc837 bcd35f cdde87 dde9af eef4d7
22241c 454837 676c53 8a916f a7ac93 c4c8b7 e2e3db
112b00`.trim().split(/\s+/);

const swatches = document.getElementById("swatches");
for (const colour of colours) {
  const button = document.createElement("button");
  button.style.background = "#" + colour;
  button.setAttribute("aria-label", "#" + colour);
  swatches.appendChild(button);
}
```
